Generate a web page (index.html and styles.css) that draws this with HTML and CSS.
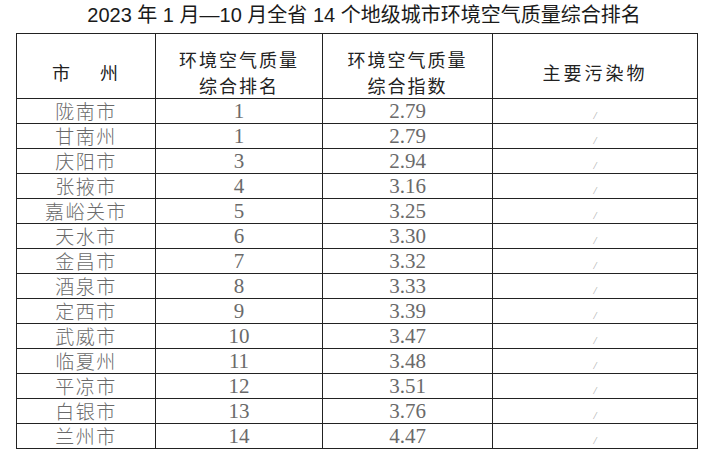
FILE: index.html
```html
<!DOCTYPE html>
<html lang="zh-CN">
<head>
<meta charset="utf-8">
<title>2023年1月—10月全省14个地级城市环境空气质量综合排名</title>
<link rel="stylesheet" href="styles.css">
</head>
<body>
<div class="page">
  <h1 class="title">2023 年 1 月—10 月全省 14 个地级城市环境空气质量综合排名</h1>
  <table class="rank">
    <colgroup>
      <col class="c1"><col class="c2"><col class="c3"><col class="c4">
    </colgroup>
    <thead>
      <tr>
        <th class="city-h">市<span class="gap"></span>州</th>
        <th>环境空气质量<br>综合排名</th>
        <th>环境空气质量<br>综合指数</th>
        <th class="wide">主要污染物</th>
      </tr>
    </thead>
    <tbody>
      <tr><td class="city">陇南市</td><td class="num">1</td><td class="num">2.79</td><td class="slash">/</td></tr>
      <tr><td class="city">甘南州</td><td class="num">1</td><td class="num">2.79</td><td class="slash">/</td></tr>
      <tr><td class="city">庆阳市</td><td class="num">3</td><td class="num">2.94</td><td class="slash">/</td></tr>
      <tr><td class="city">张掖市</td><td class="num">4</td><td class="num">3.16</td><td class="slash">/</td></tr>
      <tr><td class="city">嘉峪关市</td><td class="num">5</td><td class="num">3.25</td><td class="slash">/</td></tr>
      <tr><td class="city">天水市</td><td class="num">6</td><td class="num">3.30</td><td class="slash">/</td></tr>
      <tr><td class="city">金昌市</td><td class="num">7</td><td class="num">3.32</td><td class="slash">/</td></tr>
      <tr><td class="city">酒泉市</td><td class="num">8</td><td class="num">3.33</td><td class="slash">/</td></tr>
      <tr><td class="city">定西市</td><td class="num">9</td><td class="num">3.39</td><td class="slash">/</td></tr>
      <tr><td class="city">武威市</td><td class="num">10</td><td class="num">3.47</td><td class="slash">/</td></tr>
      <tr><td class="city">临夏州</td><td class="num">11</td><td class="num">3.48</td><td class="slash">/</td></tr>
      <tr><td class="city">平凉市</td><td class="num">12</td><td class="num">3.51</td><td class="slash">/</td></tr>
      <tr><td class="city">白银市</td><td class="num">13</td><td class="num">3.76</td><td class="slash">/</td></tr>
      <tr><td class="city">兰州市</td><td class="num">14</td><td class="num">4.47</td><td class="slash">/</td></tr>
    </tbody>
  </table>
</div>
</body>
</html>
```

FILE: styles.css
```css
html, body {
  margin: 0;
  padding: 0;
  background: #ffffff;
}

.page {
  width: 705px;
  height: 455px;
  padding: 0 0 0 16px;
  box-sizing: border-box;
  overflow: hidden;
}

.title {
  margin: 0;
  width: 681px;
  height: 33px;
  padding-left: 15px;
  box-sizing: border-box;
  font-family: "Liberation Sans", "Noto Sans CJK SC", sans-serif;
  font-size: 20px;
  font-weight: normal;
  line-height: 31px;
  color: #1a1a1a;
  text-align: center;
  white-space: nowrap;
}

.rank {
  width: 681px;
  border-collapse: collapse;
  table-layout: fixed;
  border: 1.5px solid #1a1a1a;
}

.c1 { width: 139px; }
.c2 { width: 167px; }
.c3 { width: 170px; }
.c4 { width: 205px; }

.rank th,
.rank td {
  border: 1px solid #222222;
  padding: 0;
  text-align: center;
  vertical-align: middle;
  box-sizing: border-box;
}

.rank th {
  height: 64px;
  padding-top: 12px;
  font-family: "Noto Sans CJK SC", sans-serif;
  font-size: 18px;
  font-weight: normal;
  line-height: 26px;
  letter-spacing: 2px;
  color: #222222;
}

.rank th.wide {
  letter-spacing: 3px;
}

.gap {
  display: inline-block;
  width: 28px;
}

.rank td {
  height: 25px;
  line-height: 22px;
  color: #6a6a6a;
  overflow: hidden;
}

.city {
  font-family: "Noto Sans CJK SC", serif;
  font-size: 19px;
  font-weight: 300;
  letter-spacing: 1.5px;
}

.num {
  font-family: "Liberation Serif", "DejaVu Serif", serif;
  font-size: 21px;
}

.rank td.slash {
  font-family: "Liberation Serif", serif;
  font-size: 11px;
  font-style: italic;
  line-height: 14px;
  color: #a8a8a8;
  padding-top: 7px;
}
```
